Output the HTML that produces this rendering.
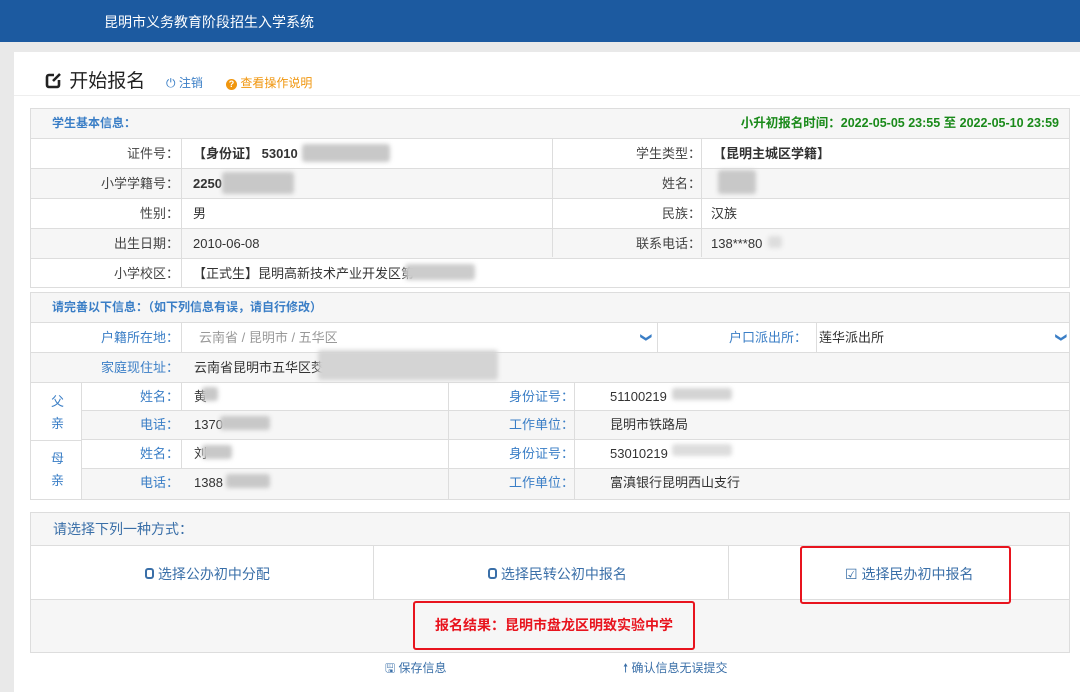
<!DOCTYPE html>
<html><head><meta charset="utf-8"><style>
*{margin:0;padding:0;box-sizing:border-box}
body{width:1080px;height:687px;overflow:hidden;background:#e9e9e9;font-family:"Liberation Sans","Noto Sans CJK SC",sans-serif;font-size:13px;color:#333;position:relative}
.hdr{position:absolute;left:0;top:0;width:1080px;height:42px;background:#1c5aa0;color:#fff;font-size:14px;padding:12px 0 0 104px}
.card{position:absolute;left:14px;top:52px;width:1066px;height:640px;background:#fff}
.title{position:absolute;left:44px;top:66px;font-size:19px;color:#222}
.a{position:absolute}
.t{position:absolute;border:1px solid #ddd}
.r{position:absolute;left:0;right:0;border-bottom:1px solid #ddd;height:30px;line-height:29px}
.g{background:#f6f6f6}
.l{position:absolute;text-align:right;color:#444}
.v{position:absolute}
.vl{position:absolute;top:0;bottom:0;border-left:1px solid #ddd}
.blue{color:#3a7ec6}
.blur{position:absolute;background:#c8c8c8;filter:blur(2px);border-radius:3px}
.sec{color:#3a7ec6;font-weight:bold}
.chev{position:absolute;top:0;color:#3a7ec6;font-size:11px;font-weight:bold;transform:rotate(90deg)}
</style></head><body>
<div class="hdr">昆明市义务教育阶段招生入学系统</div>
<div class="card"></div>
<div class="title"><svg width="20" height="20" viewBox="0 0 20 20" style="vertical-align:-3px"><path d="M15 10v5a2 2 0 0 1-2 2H5a2 2 0 0 1-2-2V7a2 2 0 0 1 2-2h5" stroke="#222" stroke-width="2.6" fill="none"/><path d="M9 11l7-7" stroke="#222" stroke-width="2.6"/></svg> 开始报名</div>
<div class="a blue" style="left:166px;top:74px;font-size:12px">⏻ 注销</div>
<div class="a" style="left:226px;top:74px;font-size:12px;color:#f0960e"><span style="display:inline-block;width:11px;height:11px;border-radius:50%;background:#f0960e;color:#fff;font-size:9px;text-align:center;line-height:11px;font-weight:bold">?</span> 查看操作说明</div>
<div class="a" style="left:14px;top:95px;width:1066px;border-top:1px solid #eee"></div>

<!-- table 1 -->
<div class="t" style="left:30px;top:108px;width:1040px;height:180px">
<div class="r g" style="top:0"><span class="sec" style="position:absolute;left:21px;font-size:12px">学生基本信息：</span><span style="position:absolute;right:10px;color:#1a8a1a;font-weight:bold;font-size:12.5px">小升初报名时间：2022-05-05 23:55 至 2022-05-10 23:59</span></div>
<div class="r" style="top:30px"><span class="l" style="left:0;width:148px">证件号：</span><span class="v" style="left:162px;font-weight:bold">【身份证】 53010</span><span class="l" style="left:522px;width:148px">学生类型：</span><span class="v" style="left:682px;font-weight:bold">【昆明主城区学籍】</span></div>
<div class="r g" style="top:60px"><span class="l" style="left:0;width:148px">小学学籍号：</span><span class="v" style="left:162px;font-weight:bold">2250</span><span class="l" style="left:522px;width:148px">姓名：</span></div>
<div class="r" style="top:90px"><span class="l" style="left:0;width:148px">性别：</span><span class="v" style="left:162px">男</span><span class="l" style="left:522px;width:148px">民族：</span><span class="v" style="left:680px">汉族</span></div>
<div class="r g" style="top:120px"><span class="l" style="left:0;width:148px">出生日期：</span><span class="v" style="left:162px">2010-06-08</span><span class="l" style="left:522px;width:148px">联系电话：</span><span class="v" style="left:680px">138***80</span></div>
<div class="r" style="top:150px;border:0"><span class="l" style="left:0;width:148px">小学校区：</span><span class="v" style="left:162px">【正式生】昆明高新技术产业开发区第</span></div>
<div class="vl" style="left:150px;top:30px"></div>
<div class="vl" style="left:521px;top:30px;bottom:30px"></div>
<div class="vl" style="left:670px;top:30px;bottom:30px"></div>
</div>
<div class="blur" style="left:302px;top:144px;width:88px;height:18px"></div>
<div class="blur" style="left:222px;top:172px;width:72px;height:22px"></div>
<div class="blur" style="left:718px;top:170px;width:38px;height:24px"></div>
<div class="blur" style="left:768px;top:236px;width:14px;height:12px;background:#ddd"></div>
<div class="blur" style="left:405px;top:264px;width:70px;height:16px;background:#ccc"></div>

<!-- table 2 -->
<div class="t" style="left:30px;top:292px;width:1040px;height:208px">
<div class="r g" style="top:0"><span class="sec" style="position:absolute;left:21px;font-size:12px">请完善以下信息：（如下列信息有误，请自行修改）</span></div>
<div class="r" style="top:30px"><span class="l blue" style="left:0;width:148px">户籍所在地：</span><span class="v" style="left:168px;color:#999">云南省 / 昆明市 / 五华区</span><span class="chev" style="left:610px">❯</span><span class="l blue" style="left:670px;width:106px">户口派出所：</span><span class="v" style="left:788px">莲华派出所</span><span class="chev" style="left:1025px">❯</span></div>
<div class="vl" style="left:150px;top:30px"></div>
<div class="vl" style="left:626px;top:30px;height:30px"></div>
<div class="vl" style="left:785px;top:30px;height:30px"></div>
<div class="r g" style="top:60px;border-left:0"><span class="l blue" style="left:0;width:148px">家庭现住址：</span><span class="v" style="left:163px">云南省昆明市五华区茭菱</span></div>
<div class="r" style="top:90px;height:28px;line-height:27px;left:50px"><span class="l blue" style="left:0;width:98px">姓名：</span><span class="v" style="left:113px">黄</span><span class="l blue" style="left:368px;width:125px">身份证号：</span><span class="v" style="left:529px">51100219</span></div>
<div class="r g" style="top:118px;height:29px;line-height:28px;left:50px"><span class="l blue" style="left:0;width:98px">电话：</span><span class="v" style="left:113px">1370</span><span class="l blue" style="left:368px;width:125px">工作单位：</span><span class="v" style="left:529px">昆明市铁路局</span></div>
<div class="r" style="top:147px;height:29px;line-height:28px;left:50px"><span class="l blue" style="left:0;width:98px">姓名：</span><span class="v" style="left:113px">刘</span><span class="l blue" style="left:368px;width:125px">身份证号：</span><span class="v" style="left:529px">53010219</span></div>
<div class="r g" style="top:176px;height:30px;line-height:28px;left:50px;border:0"><span class="l blue" style="left:0;width:98px">电话：</span><span class="v" style="left:113px">1388</span><span class="l blue" style="left:368px;width:125px">工作单位：</span><span class="v" style="left:529px">富滇银行昆明西山支行</span></div>
<div class="a blue" style="left:20px;top:98px;width:12px;line-height:22px">父亲</div>
<div class="a blue" style="left:20px;top:155px;width:12px;line-height:22px">母亲</div>
<div class="a" style="left:0;top:147px;width:50px;border-top:1px solid #ddd"></div>
<div class="vl" style="left:50px;top:90px"></div>
<div class="vl" style="left:417px;top:90px"></div>
<div class="vl" style="left:543px;top:90px"></div>
</div>
<div class="blur" style="left:318px;top:350px;width:180px;height:30px;background:#d4d4d4"></div>
<div class="blur" style="left:202px;top:387px;width:16px;height:14px"></div>
<div class="blur" style="left:220px;top:416px;width:50px;height:14px"></div>
<div class="blur" style="left:202px;top:445px;width:30px;height:14px"></div>
<div class="blur" style="left:226px;top:474px;width:44px;height:14px"></div>
<div class="blur" style="left:672px;top:388px;width:60px;height:12px;background:#d4d4d4"></div>
<div class="blur" style="left:672px;top:444px;width:60px;height:12px;background:#ddd"></div>

<!-- section 3 -->
<div class="t" style="left:30px;top:512px;width:1040px;height:141px">
<div class="a g" style="left:0;right:0;top:0;height:33px;border-bottom:1px solid #ddd;line-height:32px;padding-left:22px;font-size:14px;color:#3a6fa8">请选择下列一种方式：</div>
<div class="a" style="left:0;right:0;top:33px;height:54px;border-bottom:1px solid #ddd;color:#3a6fa8;font-size:14px">
<span class="a" style="left:114px;top:18px"><span style="display:inline-block;width:9px;height:11px;border:2px solid #3a6fa8;border-radius:3px"></span> 选择公办初中分配</span>
<span class="a" style="left:457px;top:18px"><span style="display:inline-block;width:9px;height:11px;border:2px solid #3a6fa8;border-radius:3px"></span> 选择民转公初中报名</span>
<span class="a" style="left:814px;top:18px">☑ 选择民办初中报名</span>
<div class="vl" style="left:342px"></div><div class="vl" style="left:697px"></div>
</div>
<div class="a g" style="left:0;right:0;top:87px;bottom:0"></div>
</div>
<div class="a" style="left:413px;top:601px;width:282px;height:49px;border:2px solid #e8141e;border-radius:3px;color:#e8141e;font-weight:bold;font-size:14px;text-align:center;line-height:45px;background:#f6f6f6">报名结果：昆明市盘龙区明致实验中学</div>
<div class="a" style="left:800px;top:546px;width:211px;height:58px;border:2px solid #e8141e;border-radius:3px"></div>
<div class="a blue" style="left:385px;top:659px;font-size:12px;color:#3a6fa8">🖫 保存信息</div>
<div class="a" style="left:623px;top:659px;font-size:12px;color:#3a6fa8">🠕 确认信息无误提交</div>
</body></html>
